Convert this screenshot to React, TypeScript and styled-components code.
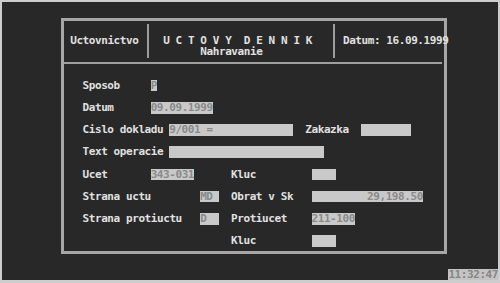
import React from "react";
import styled, { createGlobalStyle } from "styled-components";

const CW = 6.2; // text-mode cell width
const RH = 11.12; // text-mode cell height

const Global = createGlobalStyle`
  html, body { margin: 0; padding: 0; width: 500px; height: 283px; overflow: hidden; background: #cdcdcd; }
  #root { width: 500px; height: 283px; }
`;

const Screen = styled.div`
  box-sizing: border-box;
  margin: 2px 2px 3px 2px;
  width: 496px;
  height: 278px;
  background: #282828;
  display: flex;
  flex-direction: column;
  padding-top: 16px;
  font-family: "DejaVu Sans Mono", "Liberation Mono", monospace;
  font-size: 11px;
  font-weight: bold;
  letter-spacing: -0.42px;
  line-height: ${RH}px;
  color: #e0e0e0;
`;

const Panel = styled.div`
  box-sizing: border-box;
  margin-left: 59px;
  width: 386px;
  height: 236px;
  border: 3px solid #a6a6a6;
  display: flex;
  flex-direction: column;
`;

const Header = styled.div`
  display: flex;
  padding: 3.2px 0 4.4px ${CW}px;
  margin-right: 2px;
  border-bottom: 2px solid #a0a0a0;
`;

const HeaderCell = styled.div<{ cols?: number; pad?: number }>`
  ${(p) => (p.cols ? `width: ${p.cols * CW}px; flex: none;` : "flex: 1;")}
  padding-left: ${(p) => (p.pad ?? 0) * CW}px;
  box-sizing: border-box;
  height: ${RH * 3}px;
  padding-top: ${RH}px;
  white-space: pre;
`;

const Line = styled.div<{ pad?: number }>`
  height: ${RH}px;
  padding-left: ${(p) => (p.pad ?? 0) * CW}px;
  white-space: pre;
`;

const VLine = styled.div`
  width: ${CW}px;
  flex: none;
  height: ${RH * 3}px;
  display: flex;
  justify-content: center;
  &::before {
    content: "";
    width: 2px;
    height: 100%;
    background: #9c9c9c;
  }
`;

const Body = styled.div`
  display: flex;
  flex-direction: column;
  gap: ${RH}px;
  padding-top: 15.84px;
`;

const FormRow = styled.div`
  display: grid;
  grid-template-columns: repeat(61, ${CW}px);
  grid-template-rows: ${RH}px;
  height: ${RH}px;
`;

const Label = styled.div<{ col: number }>`
  grid-row: 1;
  grid-column: ${(p) => p.col - 9} / span 1;
  white-space: pre;
`;

const Field = styled.div<{ col: number; span: number; right?: boolean }>`
  grid-row: 1;
  grid-column: ${(p) => p.col - 9} / span ${(p) => p.span};
  background: #c9c9c9;
  color: #8a8a8a;
  height: ${RH + 0.5}px;
  white-space: pre;
  overflow: hidden;
  text-align: ${(p) => (p.right ? "right" : "left")};
`;

const Clock = styled.div`
  margin-top: auto;
  align-self: flex-end;
  width: ${CW * 8}px;
  height: ${RH}px;
  background: #c4c4c4;
  color: #868686;
  white-space: pre;
`;

export default function App() {
  return (
    <>
      <Global />
      <Screen>
        <Panel>
          <Header>
            <HeaderCell cols={12}>Uctovnictvo</HeaderCell>
            <VLine />
            <HeaderCell cols={29}>
              <Line pad={2}>U C T O V Y  D E N N I K</Line>
              <Line pad={8}>Nahravanie</Line>
            </HeaderCell>
            <VLine />
            <HeaderCell pad={1}>Datum: 16.09.1999</HeaderCell>
          </Header>
          <Body>
            <FormRow>
              <Label col={13}>Sposob</Label>
              <Field col={24} span={1}>P</Field>
            </FormRow>
            <FormRow>
              <Label col={13}>Datum</Label>
              <Field col={24} span={10}>09.09.1999</Field>
            </FormRow>
            <FormRow>
              <Label col={13}>Cislo dokladu</Label>
              <Field col={27} span={20}>9/001 =</Field>
              <Label col={49}>Zakazka</Label>
              <Field col={58} span={8} />
            </FormRow>
            <FormRow>
              <Label col={13}>Text operacie</Label>
              <Field col={27} span={25} />
            </FormRow>
            <FormRow>
              <Label col={13}>Ucet</Label>
              <Field col={24} span={7}>343-031</Field>
              <Label col={37}>Kluc</Label>
              <Field col={50} span={4} />
            </FormRow>
            <FormRow>
              <Label col={13}>Strana uctu</Label>
              <Field col={32} span={3}>MD</Field>
              <Label col={37}>Obrat v Sk</Label>
              <Field col={50} span={18} right>29,198.50</Field>
            </FormRow>
            <FormRow>
              <Label col={13}>Strana protiuctu</Label>
              <Field col={32} span={3}>D</Field>
              <Label col={37}>Protiucet</Label>
              <Field col={50} span={7}>211-100</Field>
            </FormRow>
            <FormRow>
              <Label col={37}>Kluc</Label>
              <Field col={50} span={4} />
            </FormRow>
          </Body>
        </Panel>
        <Clock>11:32:47</Clock>
      </Screen>
    </>
  );
}
